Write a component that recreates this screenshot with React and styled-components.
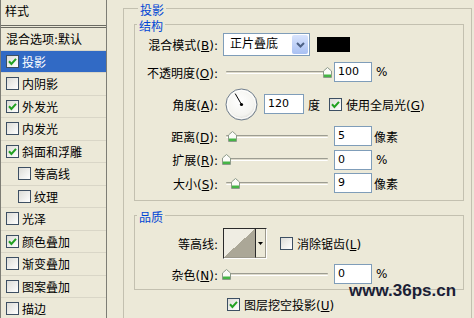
import React from 'react'
import styled, { createGlobalStyle } from 'styled-components'

const GlobalStyle = createGlobalStyle`
  html, body {
    margin: 0;
    padding: 0;
    background: #ece9d8;
  }
  body {
    font-family: "DejaVu Sans", "Noto Sans CJK SC", sans-serif;
    font-size: 12px;
    color: #000;
  }
`

const Dialog = styled.div`
  position: relative;
  display: flex;
  width: 474px;
  height: 318px;
  overflow: hidden;
  background: #ece9d8;
`

/* left list of layer styles */

const StyleList = styled.div`
  flex: none;
  width: 107px;
  height: 100%;
  box-sizing: border-box;
  border-left: 1px solid #7d7d75;
  border-right: 1px solid #7d7d75;
`

const ListHeader = styled.div`
  height: 28px;
  box-sizing: border-box;
  padding-left: 4px;
  line-height: 25px;
  border-bottom: 3px double #6a6a62;
`

const ListItem = styled.div`
  display: flex;
  align-items: center;
  gap: 3px;
  height: 22.5px;
  box-sizing: border-box;
  padding-left: ${p => (p.$indent ? 17 : 5)}px;
  border-bottom: 1px solid #d9d6c7;
  background: ${p => (p.$active ? '#316ac5' : 'transparent')};
  color: ${p => (p.$active ? '#fff' : '#000')};
  white-space: nowrap;
`

const Box = styled.span`
  flex: none;
  display: inline-flex;
  align-items: center;
  justify-content: center;
  width: 13px;
  height: 13px;
  box-sizing: border-box;
  border: 1px solid #3d4f63;
  background: linear-gradient(135deg, #dcdcd7 0%, #fff 100%);
`

const Checkbox = ({ checked }) => (
  <Box>
    {checked && (
      <svg width="9" height="9" viewBox="0 0 9 9">
        <path d="M1 4.3 L3.4 6.9 L8 1.8" fill="none" stroke="#21a121" strokeWidth="2" />
      </svg>
    )}
  </Box>
)

/* right side: group boxes */

const Main = styled.div`
  flex: 1;
  padding: 0 2px 0 16px;
`

const Group = styled.fieldset`
  margin: ${p => p.$mt || 0}px 0 0;
  padding: ${p => p.$pad};
  min-width: 0;
  min-height: ${p => p.$minH || 0}px;
  border: 1px solid #c3c0b0;
`

const Legend = styled.legend`
  margin-left: ${p => p.$ml}px;
  padding: 4px 2px 0;
  color: #0046d5;
  font-family: "Noto Sans CJK SC", sans-serif;
  font-size: 12px;
  line-height: 12px;
`

const Row = styled.div`
  display: flex;
  align-items: center;
  height: ${p => p.$h}px;
  margin-top: ${p => p.$mt || 0}px;
  margin-left: ${p => p.$ml || 0}px;
  white-space: nowrap;
`

const Label = styled.span`
  flex: none;
  width: 83px;
  margin-right: 4px;
  text-align: right;
`

const Select = styled.div`
  display: flex;
  width: 87px;
  height: 23px;
  box-sizing: border-box;
  margin-left: 1px;
  border: 1px solid #7f9db9;
  background: #fff;
`

const SelectText = styled.span`
  flex: 1;
  padding-left: 6px;
  line-height: 21px;
`

const SelectButton = styled.span`
  display: flex;
  align-items: center;
  justify-content: center;
  width: 16px;
  margin: 1px;
  border-radius: 2px;
  background: linear-gradient(#d8e4fd, #a9c0f2);
`

const Swatch = styled.div`
  width: 33px;
  height: 15px;
  margin-left: 7px;
  background: #000;
`

const Track = styled.div`
  position: relative;
  flex: none;
  width: 110px;
  height: 11px;

  &::before {
    content: '';
    position: absolute;
    left: 4px;
    right: 4px;
    top: 4px;
    height: 3px;
    box-sizing: border-box;
    border-top: 1px solid #9d9d92;
    border-bottom: 1px solid #fff;
    border-radius: 1px;
    background: #dedbcc;
  }
`

const Thumb = styled.svg`
  position: absolute;
  top: 0;
`

const Slider = ({ pos }) => (
  <Track>
    <Thumb width="9" height="11" viewBox="0 0 9 11" style={{ left: pos * 101 }}>
      <polygon points="0.5,4 4.5,0.5 8.5,4 8.5,10.5 0.5,10.5" fill="#fbfbf8" stroke="#8d9a8a" />
      <rect x="1" y="7.5" width="7" height="2.5" fill="#45b545" />
    </Thumb>
  </Track>
)

const Field = styled.div`
  flex: none;
  width: ${p => p.$w || 38}px;
  height: 20px;
  box-sizing: border-box;
  margin-left: ${p => p.$ml || 0}px;
  padding-left: 3px;
  border: 1px solid #7f9db9;
  background: #fff;
  font-size: 11px;
  line-height: 18px;
`

const Unit = styled.span`
  margin-left: ${p => p.$ml || 2}px;
`

const Dial = styled.svg`
  flex: none;
  margin-left: 3px;
`

const CheckLabel = styled.span`
  display: inline-flex;
  align-items: center;
  gap: 4px;
  margin-left: ${p => p.$ml || 0}px;
`

const Contour = styled.div`
  display: flex;
  height: 31px;
  margin-left: 1px;
  box-sizing: border-box;
  border: 1px solid;
  border-color: #2a2a2a #fff #fff #2a2a2a;
`

const ContourPreview = styled.div`
  width: 31px;
  border-right: 1px solid #2a2a2a;
  border-bottom: 1px solid #9c998c;
  background: linear-gradient(to top left, #aba797 50%, #efede3 50%);
`

const ContourArrow = styled.div`
  display: flex;
  align-items: center;
  justify-content: center;
  width: 9px;
  border-right: 1px solid #9c998c;
  border-bottom: 1px solid #9c998c;
`

const Watermark = styled.div`
  position: absolute;
  left: 349px;
  top: 281px;
  font-family: "Liberation Sans", Arial, sans-serif;
  font-size: 17px;
  font-weight: bold;
  color: #1b1e36;
`

const styles = [
  { name: '投影', checked: true, active: true },
  { name: '内阴影' },
  { name: '外发光', checked: true },
  { name: '内发光' },
  { name: '斜面和浮雕', checked: true },
  { name: '等高线', indent: true },
  { name: '纹理', indent: true },
  { name: '光泽' },
  { name: '颜色叠加', checked: true },
  { name: '渐变叠加' },
  { name: '图案叠加' },
  { name: '描边' },
]

const SliderRow = ({ label, k, pos, value, unit, h, mt }) => (
  <Row $h={h} $mt={mt}>
    <Label>
      {label}(<u>{k}</u>):
    </Label>
    <Slider pos={pos} />
    <Field $ml={2}>{value}</Field>
    <Unit $ml={unit === '%' ? 4 : 2}>{unit}</Unit>
  </Row>
)

export default function App() {
  return (
    <Dialog>
      <GlobalStyle />
      <StyleList>
        <ListHeader>样式</ListHeader>
        <ListItem>混合选项:默认</ListItem>
        {styles.map(s => (
          <ListItem key={s.name} $active={s.active} $indent={s.indent}>
            <Checkbox checked={s.checked} />
            {s.name}
          </ListItem>
        ))}
      </StyleList>

      <Main>
        <Group $pad="0 7px 0 10px" $minH={340}>
          <Legend $ml={4}>投影</Legend>

          <Group $pad="1px 0 5px 0">
            <Legend $ml={2}>结构</Legend>
            <Row $h={23}>
              <Label>
                混合模式(<u>B</u>):
              </Label>
              <Select>
                <SelectText>正片叠底</SelectText>
                <SelectButton>
                  <svg width="9" height="6" viewBox="0 0 9 6">
                    <path d="M1 1 L4.5 4.5 L8 1" fill="none" stroke="#4d6185" strokeWidth="2" />
                  </svg>
                </SelectButton>
              </Select>
              <Swatch />
            </Row>
            <SliderRow label="不透明度" k="O" pos={1} value="100" unit="%" h={24} mt={4} />
            <Row $h={32} $mt={4}>
              <Label>
                角度(<u>A</u>):
              </Label>
              <Dial width="33" height="33" viewBox="0 0 33 33">
                <defs>
                  <radialGradient id="dialFill" cx="0.45" cy="0.4" r="0.65">
                    <stop offset="0" stopColor="#ffffff" />
                    <stop offset="0.7" stopColor="#f4f4f0" />
                    <stop offset="1" stopColor="#d2d2cc" />
                  </radialGradient>
                </defs>
                <circle cx="16.5" cy="16.5" r="15.5" fill="url(#dialFill)" stroke="#6f7d8c" />
                <circle cx="16.5" cy="16.5" r="14" fill="none" stroke="#fff" strokeWidth="1" />
                <line x1="16.5" y1="16.5" x2="10.2" y2="5.6" stroke="#000" strokeWidth="1" />
                <circle cx="16.5" cy="16.5" r="1.6" fill="#000" />
              </Dial>
              <Field $w={40} $ml={6}>120</Field>
              <Unit $ml={4}>度</Unit>
              <CheckLabel $ml={9}>
                <Checkbox checked />
                <span>
                  使用全局光(<u>G</u>)
                </span>
              </CheckLabel>
            </Row>
            <SliderRow label="距离" k="D" pos={0.055} value="5" unit="像素" h={24} mt={4} />
            <SliderRow label="扩展" k="R" pos={0} value="0" unit="%" h={23} />
            <SliderRow label="大小" k="S" pos={0.094} value="9" unit="像素" h={24} />
          </Group>

          <Group $mt={6} $pad="0 0 4px 0">
            <Legend $ml={2}>品质</Legend>
            <Row $h={31} $mt={5}>
              <Label>等高线:</Label>
              <Contour>
                <ContourPreview />
                <ContourArrow>
                  <svg width="5" height="3" viewBox="0 0 5 3">
                    <path d="M0 0 H5 L2.5 3 Z" fill="#000" />
                  </svg>
                </ContourArrow>
              </Contour>
              <CheckLabel $ml={13}>
                <Checkbox />
                <span>
                  消除锯齿(<u>L</u>)
                </span>
              </CheckLabel>
            </Row>
            <SliderRow label="杂色" k="N" pos={0} value="0" unit="%" h={22} mt={4} />
          </Group>

          <Row $h={16} $mt={6} $ml={93}>
            <CheckLabel>
              <Checkbox checked />
              <span>
                图层挖空投影(<u>U</u>)
              </span>
            </CheckLabel>
          </Row>
        </Group>
      </Main>

      <Watermark>www.36ps.cn</Watermark>
    </Dialog>
  )
}
